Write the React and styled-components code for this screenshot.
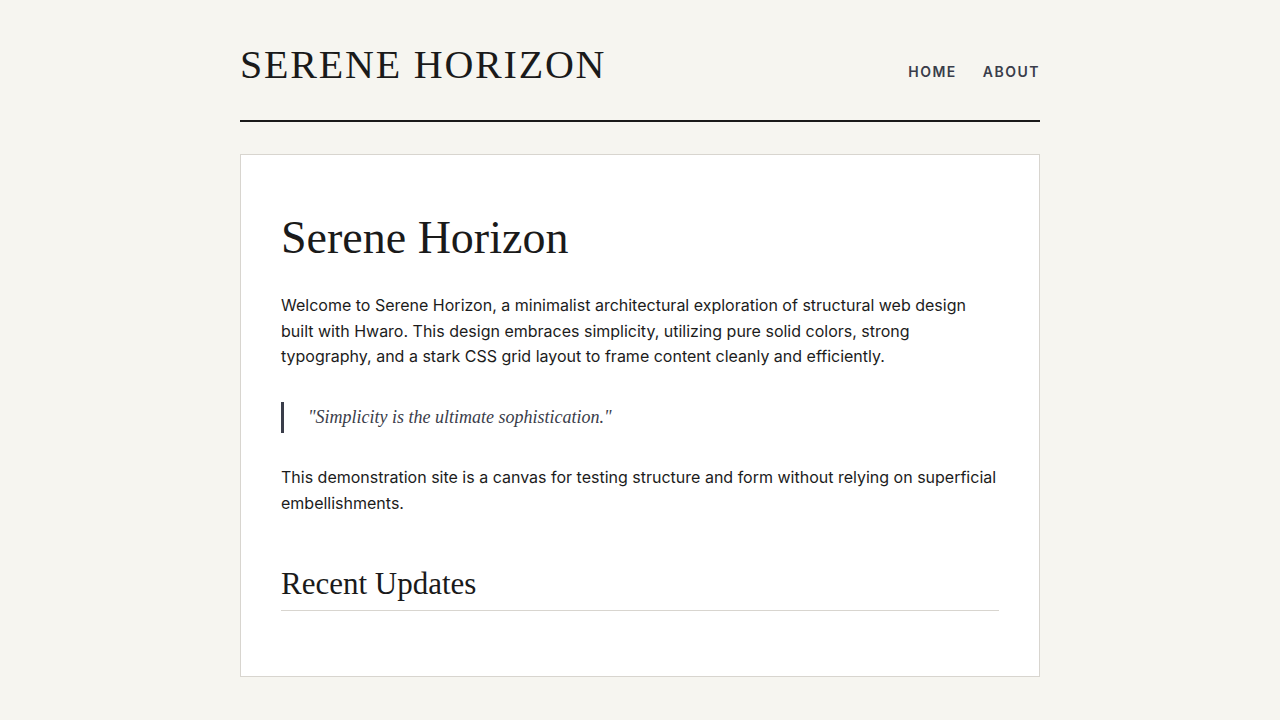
import styled, { createGlobalStyle } from 'styled-components';

const GlobalStyle = createGlobalStyle`
  body {
    margin: 0;
    background: #f6f5f0;
    font-family: Inter, "Noto Sans", sans-serif;
    color: #1c1c1c;
  }
`;

const Page = styled.div`
  width: 800px;
  margin: 0 auto;
  padding-top: 41px;
`;

const Header = styled.header`
  display: flex;
  justify-content: space-between;
  align-items: flex-end;
  padding-bottom: 31px;
  border-bottom: 2px solid #1a1a1a;
`;

const SiteTitle = styled.div`
  font-family: "Liberation Serif", serif;
  font-size: 40px;
  line-height: 1.2;
  letter-spacing: 1.8px;
  color: #1a1a1a;
`;

const Nav = styled.nav`
  display: flex;
  gap: 26px;
  padding-bottom: 9px;
`;

const NavLink = styled.a`
  font-family: Inter, sans-serif;
  font-size: 14px;
  font-weight: 600;
  letter-spacing: 1.5px;
  text-transform: uppercase;
  color: #3a3d4a;
  text-decoration: none;
`;

const Card = styled.main`
  margin-top: 32px;
  background: #fff;
  border: 1px solid #d8d5cf;
  padding: 55px 40px 65px;
`;

const Title = styled.h1`
  font-family: "Liberation Serif", serif;
  font-weight: 400;
  font-size: 46px;
  line-height: 1.2;
  margin: 0 0 28px;
  color: #1a1a1a;
`;

const Paragraph = styled.p`
  font-size: 16px;
  line-height: 1.6;
  margin: 0 0 24px;
  color: #1c1c1c;
`;

const Quote = styled.blockquote`
  margin: 32px 0;
  padding: 2px 0 2px 24px;
  border-left: 3px solid #3a3d4a;
  font-family: "Liberation Serif", serif;
  font-style: italic;
  font-size: 18px;
  line-height: 1.5;
  color: #3a3d4a;
`;

const SectionTitle = styled.h2`
  font-family: "Liberation Serif", serif;
  font-weight: 400;
  font-size: 31px;
  line-height: 1.2;
  margin: 49px 0 0;
  padding-bottom: 8px;
  border-bottom: 1px solid #d8d5cf;
  color: #1a1a1a;
`;

export default function App() {
  return (
    <>
      <GlobalStyle />
      <Page>
        <Header>
          <SiteTitle>SERENE HORIZON</SiteTitle>
          <Nav>
            <NavLink href="#">Home</NavLink>
            <NavLink href="#">About</NavLink>
          </Nav>
        </Header>
        <Card>
          <Title>Serene Horizon</Title>
          <Paragraph>
            Welcome to Serene Horizon, a minimalist architectural exploration of structural web design
            built with Hwaro. This design embraces simplicity, utilizing pure solid colors, strong
            typography, and a stark CSS grid layout to frame content cleanly and efficiently.
          </Paragraph>
          <Quote>"Simplicity is the ultimate sophistication."</Quote>
          <Paragraph>
            This demonstration site is a canvas for testing structure and form without relying on
            superficial embellishments.
          </Paragraph>
          <SectionTitle>Recent Updates</SectionTitle>
        </Card>
      </Page>
    </>
  );
}
